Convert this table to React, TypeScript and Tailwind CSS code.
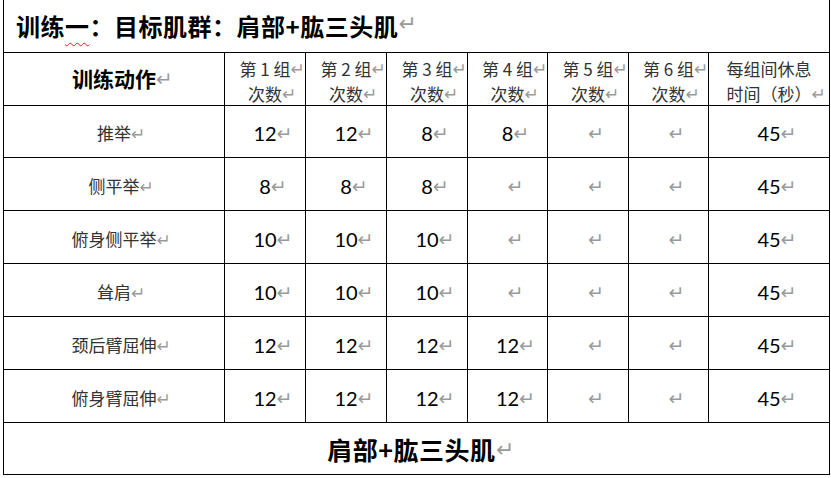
import React from "react";

const CJK = "font-['Noto_Sans_CJK_SC','Noto_Sans',sans-serif]";
const NUM = "font-['Lato','Noto_Sans_CJK_SC',sans-serif]";

function Mark({ size = "text-[15px]" }: { size?: string }) {
  return (
    <span
      className={`inline-block w-0 overflow-visible whitespace-nowrap align-top font-['DejaVu_Sans',sans-serif] font-normal leading-none text-[#9a9a9a] ${size}`}
    >
      ↵
    </span>
  );
}

const rows: { name: string; vals: string[] }[] = [
  { name: "推举", vals: ["12", "12", "8", "8", "", "", "45"] },
  { name: "侧平举", vals: ["8", "8", "8", "", "", "", "45"] },
  { name: "俯身侧平举", vals: ["10", "10", "10", "", "", "", "45"] },
  { name: "耸肩", vals: ["10", "10", "10", "", "", "", "45"] },
  { name: "颈后臂屈伸", vals: ["12", "12", "12", "12", "", "", "45"] },
  { name: "俯身臂屈伸", vals: ["12", "12", "12", "12", "", "", "45"] },
];

const cell = "bg-white flex items-center justify-center";

export default function App() {
  return (
    <div className="w-[831px] h-[478px] bg-white">
      <div className="ml-[3px] w-[827px] grid grid-cols-[220px_80px_80px_80px_79px_80px_79px_120px] grid-rows-[52px_52px_51px_52px_52px_52px_52px_52px_51px] gap-px px-px pb-px bg-black">
        {/* Title */}
        <div className={`col-span-8 bg-white flex items-center pl-[12px] ${CJK} font-bold text-[24px] tracking-[0.5px] text-black`}>
          <span>
            训练
            <span className="underline decoration-wavy decoration-[#e02020] decoration-1 underline-offset-[6px]">一</span>
            ：目标肌群：肩部+肱三头肌
            <Mark size="text-[22px] mt-[5px]" />
          </span>
        </div>

        {/* Header */}
        <div className={`${cell} ${CJK} font-bold text-[21px] text-black`}>
          <span>
            训练动作
            <Mark size="text-[20px] mt-[6px]" />
          </span>
        </div>
        {[1, 2, 3, 4, 5, 6].map((n) => (
          <div key={n} className={`${cell} flex-col leading-[25px] pt-[3px] ${CJK} text-[17px] text-[#333]`}>
            <span>
              第 {n} 组
              <Mark size="text-[17px] mt-[5px]" />
            </span>
            <span>
              次数
              <Mark size="text-[17px] mt-[5px]" />
            </span>
          </div>
        ))}
        <div className={`${cell} flex-col leading-[25px] pt-[3px] ${CJK} text-[17px] text-[#333]`}>
          <span>每组间休息</span>
          <span>
            时间（秒）
            <Mark size="text-[17px] mt-[5px]" />
          </span>
        </div>

        {/* Body */}
        {rows.map((r) => (
          <React.Fragment key={r.name}>
            <div className={`${cell} pt-[3px] ${CJK} text-[17px] text-[#333]`}>
              <span>
                {r.name}
                <Mark size="text-[17px] mt-[6px]" />
              </span>
            </div>
            {r.vals.map((v, i) => (
              <div key={i} className={`${cell} pt-[3px] ${NUM} text-[20px] text-black`}>
                <span>
                  {v}
                  <Mark size="text-[19px] mt-[6px]" />
                </span>
              </div>
            ))}
          </React.Fragment>
        ))}

        {/* Footer */}
        <div className={`col-span-8 ${cell} pt-[2px] pr-[10px] ${CJK} font-bold text-[25px] tracking-[0.5px] text-black`}>
          <span>
            肩部+肱三头肌
            <Mark size="text-[22px] mt-[8px]" />
          </span>
        </div>
      </div>
    </div>
  );
}
